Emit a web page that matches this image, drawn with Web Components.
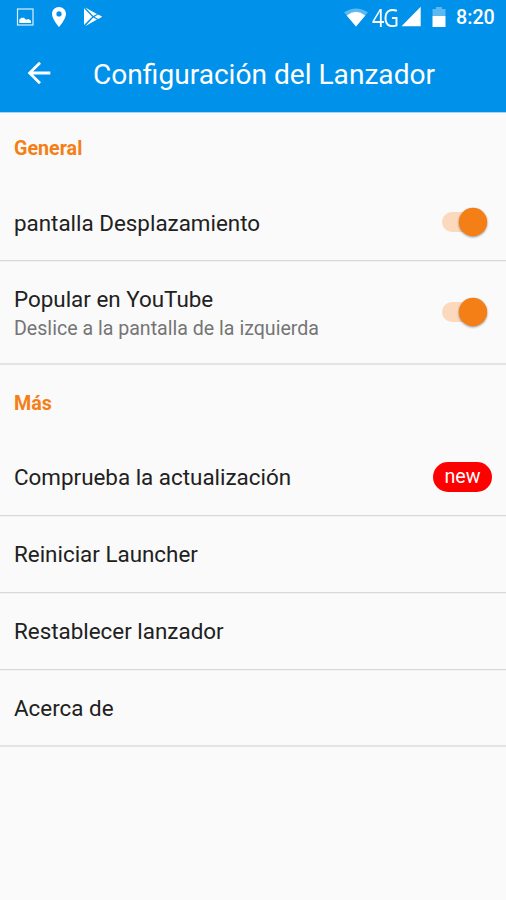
<!DOCTYPE html>
<html lang="es">
<head>
<meta charset="utf-8">
<title>Configuración del Lanzador</title>
<style>
html, body { margin: 0; height: 100%; background: #fafafa; }
body { font-family: Roboto, "Noto Sans", sans-serif; overflow: hidden; }
</style>
</head>
<body>
<launcher-settings></launcher-settings>
<script>
const define = (name, html) => customElements.define(name, class extends HTMLElement {
  constructor() {
    super();
    this.attachShadow({ mode: 'open' }).innerHTML = html;
  }
});

define('status-bar', `
<style>
:host { display: flex; height: 34px; align-items: center; color: #fff; }
svg { display: block; flex: none; }
.gap { flex: 1; }
.net { font: 400 25.5px/35px "Open Sans", sans-serif; letter-spacing: -1.2px; margin-left: 3px; width: 28px;
  white-space: nowrap; transform: scaleX(.85); transform-origin: 0 50%; }
.time { font-size: 19.7px; line-height: 34px; font-weight: 500; width: 50px; padding-top: 2px; }
</style>
<svg width="110" height="34" viewBox="0 0 110 34">
  <rect x="17.5" y="9" width="15.5" height="16" fill="none" stroke="#fff" stroke-opacity=".85" stroke-width="1.2"/>
  <path d="M19.3 23V19.5L21.5 17.8H24L26 19.7L28.5 18.9L31 20.8V23Z" fill="#fff"/>
  <path fill-rule="evenodd" d="M59 7C55 7 52 10 52 14C52 19 59 27 59 27S66 19 66 14C66 10 63 7 59 7ZM59 11.3A2.6 2.6 0 1 1 59 16.5A2.6 2.6 0 1 1 59 11.3Z" fill="#fff"/>
  <path d="M84 8.2V25L92.2 16.8Z M85.2 7.4L97 14L93.3 16ZM85.2 26.2L97 19.5L93.3 17.6ZM94.5 16.8L98.2 14.5L102.3 16.8L98.2 19Z" fill="#fff"/>
</svg>
<span class="gap"></span>
<svg width="25" height="34" viewBox="0 0 25 34">
  <path d="M0 12.2Q12 4.6 24 12.2L12 26.5Z" fill="#fff" fill-opacity=".36"/>
  <path d="M2.7 15.4Q12 8.2 21.3 15.4L12 26.5Z" fill="#fff"/>
</svg>
<span class="net">4G</span>
<svg width="56" height="34" viewBox="0 0 56 34">
  <path d="M1.5 26.3L20.7 6.8V26.3Z" fill="#fff"/>
  <path d="M32.5 16V9H36V7H42V9H45.5V16Z" fill="#fff" fill-opacity=".36"/>
  <path d="M32.5 16H45.5V27H32.5Z" fill="#fff"/>
</svg>
<span class="time">8:20</span>
`);

define('app-toolbar', `
<style>
:host { display: flex; height: 78px; align-items: center; color: #fff; }
svg { display: block; margin-left: 22px; }
.title { margin-left: 37px; padding-top: 3px; font-size: 28.1px; line-height: 36px; white-space: nowrap; }
</style>
<svg width="34" height="34" viewBox="0 0 24 24"><path fill="#fff" d="M20 11H7.83l5.59-5.59L12 4l-8 8 8 8 1.41-1.41L7.83 13H20v-2z"/></svg>
<span class="title"><slot></slot></span>
`);

define('section-title', `
<style>
:host { display: flex; align-items: center; box-sizing: border-box; padding-left: 14px; height: var(--h, 73px);
  padding-top: var(--shift, 0); color: #f57f17; font-size: 19.7px; line-height: 24px; font-weight: 700; }
</style><slot></slot>`);

define('setting-row', `
<style>
:host { display: flex; align-items: center; box-sizing: border-box; padding: 0 14px; height: var(--h, 77px);
  border-bottom: var(--line, 1px solid #d8d8d8); }
:host(:not([solid])) { box-shadow: 0 1px #f1f1f1; }
.text { flex: 1; display: flex; flex-direction: column; padding-top: var(--drop, 0); color: #212121; font-size: 22.4px; line-height: 28px; white-space: nowrap; }
::slotted([slot=note]) { color: #757575; font-size: 19.6px; line-height: 28px; padding-top: 2px; }
</style>
<div class="text"><span><slot></slot></span><slot name="note"></slot></div>
<slot name="end"></slot>`);

define('toggle-switch', `
<style>
:host { display: block; width: 50px; height: 34px; }
svg { display: block; overflow: visible; }
.knob { filter: drop-shadow(0 1.5px 1.2px rgba(0,0,0,.38)); }
</style>
<svg width="50" height="34" viewBox="0 0 50 34">
  <rect x="0" y="7" width="40" height="20" rx="10" fill="#fbd9bd"/>
  <circle class="knob" cx="31" cy="17" r="14.2" fill="#f57f17"/>
</svg>`);

define('new-badge', `
<style>
:host { display: block; width: 59px; height: 30px; border-radius: 15px; background: #f00; color: #fff;
  font-size: 19.7px; line-height: 29px; text-align: center; }
</style><slot></slot>`);

define('launcher-settings', `
<style>
:host { display: block; height: 900px; background: #fafafa; }
header { background: #0091ea; height: 113px; border-bottom: 1px solid #a5d5f6; box-sizing: border-box; }
.g { --h: 71px; --shift: 1px; }
.a { --h: 77px; --drop: 2px; }
.b { --h: 104px; --drop: 4px; --line: 2px solid #e4e4e4; }
.m { --h: 74px; --shift: 3px; }
.l { --line: 2px solid #e4e4e4; }
</style>
<header><status-bar></status-bar><app-toolbar>Configuración del Lanzador</app-toolbar></header>
<main>
<section-title class="g">General</section-title>
<setting-row class="a">pantalla Desplazamiento<toggle-switch slot="end"></toggle-switch></setting-row>
<setting-row class="b" solid>Popular en YouTube<span slot="note">Deslice a la pantalla de la izquierda</span><toggle-switch slot="end"></toggle-switch></setting-row>
<section-title class="m">Más</section-title>
<setting-row>Comprueba la actualización<new-badge slot="end">new</new-badge></setting-row>
<setting-row>Reiniciar Launcher</setting-row>
<setting-row>Restablecer lanzador</setting-row>
<setting-row class="l" solid>Acerca de</setting-row>
</main>`);
</script>
</body>
</html>
